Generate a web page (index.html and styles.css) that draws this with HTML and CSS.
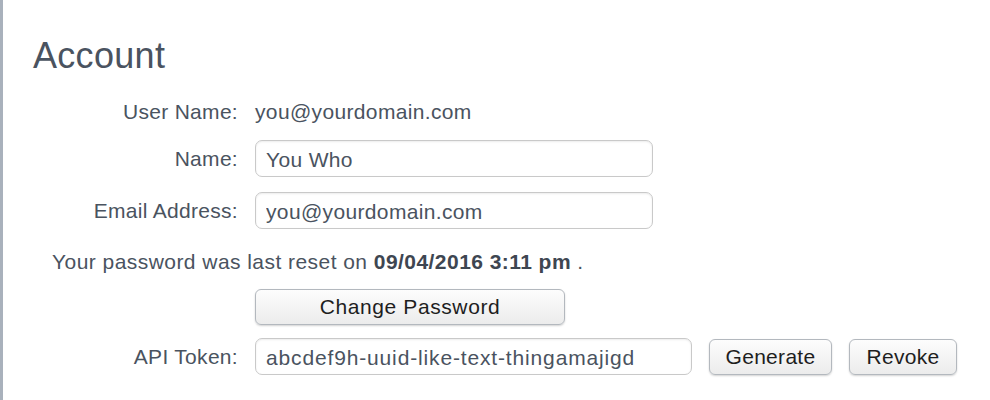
FILE: index.html
```html
<!DOCTYPE html>
<html>
<head>
<meta charset="utf-8">
<link rel="stylesheet" href="styles.css">
</head>
<body>
<div class="panel">
  <h1 class="title">Account</h1>
  <div class="form">
    <div class="row row-user">
      <span class="label">User Name:</span>
      <span class="value">you@yourdomain.com</span>
    </div>
    <div class="row row-field">
      <span class="label">Name:</span>
      <input class="field field-name" type="text" value="You Who">
    </div>
    <div class="row row-field">
      <span class="label">Email Address:</span>
      <input class="field field-name" type="text" value="you@yourdomain.com">
    </div>
    <p class="note">Your password was last reset on <b>09/04/2016 3:11 pm</b> .</p>
    <div class="row row-btn">
      <span class="label"></span>
      <button class="btn btn-wide" type="button">Change Password</button>
    </div>
    <div class="row row-field">
      <span class="label">API Token:</span>
      <input class="field field-token" type="text" value="abcdef9h-uuid-like-text-thingamajigd">
      <button class="btn btn-gen" type="button">Generate</button>
      <button class="btn btn-rev" type="button">Revoke</button>
    </div>
  </div>
</div>
</body>
</html>
```
FILE: styles.css
```css
html, body {
  margin: 0;
  padding: 0;
  background: #ffffff;
}
body {
  font-family: "Liberation Sans", Arial, sans-serif;
  color: #4a5360;
  width: 990px;
  height: 400px;
  overflow: hidden;
}
.panel {
  border-left: 3px solid #a9b1bc;
  height: 400px;
  box-sizing: border-box;
  padding: 35px 0 0 30px;
}
.title {
  margin: 0;
  font-size: 36px;
  font-weight: normal;
  line-height: 42px;
  letter-spacing: 0.3px;
  color: #4a5360;
}
.form {
  display: flex;
  flex-direction: column;
}
.row {
  display: flex;
  align-items: center;
}
.label {
  width: 205px;
  text-align: right;
  margin-right: 17px;
  font-size: 21px;
  letter-spacing: 0.3px;
  flex: none;
}
.value {
  font-size: 21px;
  letter-spacing: 0.35px;
}
.row-user {
  margin-top: 22px;
  height: 26px;
}
.row-field {
  margin-top: 15px;
  height: 37px;
}
.field {
  box-sizing: border-box;
  height: 37px;
  border: 1px solid #c9c9c9;
  border-radius: 7px;
  padding: 2px 10px 0;
  font-family: inherit;
  font-size: 21px;
  letter-spacing: 0.35px;
  color: #4a5360;
  background: #fff;
  box-shadow: inset 0 1px 2px rgba(0,0,0,0.08);
  outline: none;
}
.field-name { width: 398px; }
.field-token { width: 437px; letter-spacing: 0.85px; }
.note {
  margin: 20px 0 0 19px;
  font-size: 21px;
  letter-spacing: 0.45px;
  line-height: 26px;
}
.note b { color: #3e4651; }
.row-btn {
  margin-top: 14px;
  height: 36px;
}
.row-btn + .row-field { margin-top: 13px; }
.btn {
  box-sizing: border-box;
  height: 36px;
  border: 1px solid #b3b8be;
  border-radius: 6px;
  background: linear-gradient(#fdfdfd, #ececec);
  box-shadow: 0 1px 2px rgba(0,0,0,0.18);
  font-family: inherit;
  font-size: 21px;
  letter-spacing: 0.3px;
  color: #1e1e1e;
  padding: 0;
}
.btn-wide { width: 310px; letter-spacing: 0.6px; }
.btn-gen { width: 123px; margin-left: 17px; }
.btn-rev { width: 108px; margin-left: 17px; }
```
